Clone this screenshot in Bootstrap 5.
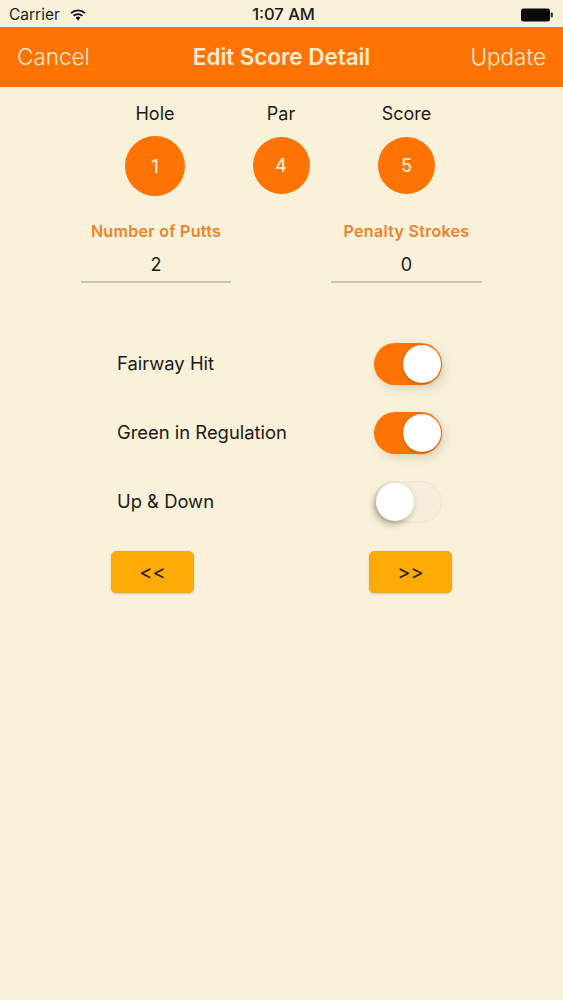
<!doctype html>
<html lang="en"><head><meta charset="utf-8"><title>Edit Score Detail</title>
<link href="https://cdn.jsdelivr.net/npm/bootstrap@5.3.0/dist/css/bootstrap.min.css" rel="stylesheet">
<style>
html,body{height:100%}
body{background:#f9f1da;color:#1c1a14;font-family:Inter,"Liberation Sans",sans-serif;width:563px;min-height:1000px}
.sbar{height:27px;padding:2px 10px 0 9px;font-size:15.5px}
.sbar>*{flex:1 1 0}
.sbar .gapw{gap:10px}
.stime{text-align:center;font-weight:500;font-size:16.5px;padding-left:5px}
.tbar{height:60px;background:#ff7204;color:#fbeccf;padding:0 17px}
.tbar .side{font-size:22.5px;font-weight:300;flex:1 1 0}
.tbar .ttl{font-size:22.6px;font-weight:600;letter-spacing:-.1px}
.scores{padding:16px 0 0 93px}
.scol{width:124px}
.scol.mid{width:128px}
.scol.end{width:123px}
.slab{font-size:18px;line-height:22px;height:22px}
.ball{width:57px;height:57px;background:#ff7204;color:#fbeccf;font-size:18px;font-weight:500;margin-top:12px}
.ball.big{width:60px;height:60px;margin-top:11px}
.fields{padding:26px 0 0 81px;gap:100px}
.fcol{width:150px}
.fcol.wide{width:151px}
.flab{color:#f0812a;font-size:16px;font-weight:600;line-height:18px;white-space:nowrap;letter-spacing:.3px;margin-inline:-10px}
.form-control.fval{font-size:18px;line-height:22px;padding:14px 0 5px;border:0;border-bottom:2px solid #c9c4b5;border-radius:0;background:transparent;color:#1c1a14}
.form-control.fval:focus{background:transparent;box-shadow:none;border-color:#c9c4b5}
.opts{padding:60px 121px 0 117px;gap:27px}
.optrow{height:42px;font-size:18.4px}
.tog{width:68px;height:42px;padding:2px 1px 2px 2px;border-radius:21px;background:#ff7204;box-shadow:3px 4px 8px rgba(90,70,30,.16)}
.tog.off{background:#f6eeda;border:1px solid #ebe6d8;padding:1px;box-shadow:none}
.knob{width:38px;height:38px;background:#fff;box-shadow:0 1px 3px rgba(60,40,10,.35)}
.tog.off .knob{box-shadow:-2px 3px 6px rgba(60,40,10,.4)}
.navs{padding:28px 111px 0;}
.btn.jump{width:83px;height:42px;background:#ffab07;border:1px solid #e6a83a;border-radius:5px;color:#2c1c00;font-size:20px;line-height:1;padding:0;box-shadow:0 1px 2px rgba(90,70,30,.25)}
</style></head>
<body>
<div class="sbar d-flex align-items-center">
  <div class="d-flex align-items-center gapw"><span>Carrier</span>
    <svg width="16" height="12" viewBox="0 0 16 12"><path d="M8 11.6 5.6 8.8a3.4 3.4 0 0 1 4.8 0Z" fill="#111"/><path d="M3.6 6.8a6.4 6.4 0 0 1 8.8 0M1 4.1a10.2 10.2 0 0 1 14 0" fill="none" stroke="#111" stroke-width="1.7"/></svg></div>
  <div class="stime">1:07 AM</div>
  <div class="d-flex justify-content-end">
    <svg width="32" height="14" viewBox="0 0 32 14"><rect x="0" y="0.5" width="29" height="13" rx="2.5" fill="#0a0a0a"/><rect x="29.8" y="4.5" width="2" height="5" rx="1" fill="#222"/></svg></div>
</div>
<nav class="tbar d-flex align-items-center">
  <div class="side">Cancel</div><div class="ttl">Edit Score Detail</div><div class="side text-end">Update</div>
</nav>
<div class="scores d-flex text-center">
  <div class="scol d-flex flex-column align-items-center"><div class="slab">Hole</div><div class="ball big rounded-circle d-flex align-items-center justify-content-center">1</div></div>
  <div class="scol mid d-flex flex-column align-items-center"><div class="slab">Par</div><div class="ball rounded-circle d-flex align-items-center justify-content-center">4</div></div>
  <div class="scol end d-flex flex-column align-items-center"><div class="slab">Score</div><div class="ball rounded-circle d-flex align-items-center justify-content-center">5</div></div>
</div>
<div class="fields d-flex text-center">
  <div class="fcol"><div class="flab">Number of Putts</div><input class="form-control fval text-center" value="2" aria-label="Number of Putts"></div>
  <div class="fcol wide"><div class="flab">Penalty Strokes</div><input class="form-control fval text-center" value="0" aria-label="Penalty Strokes"></div>
</div>
<div class="opts d-flex flex-column">
  <div class="optrow d-flex align-items-center justify-content-between"><span>Fairway Hit</span><div class="tog d-flex justify-content-end"><div class="knob rounded-circle"></div></div></div>
  <div class="optrow d-flex align-items-center justify-content-between"><span>Green in Regulation</span><div class="tog d-flex justify-content-end"><div class="knob rounded-circle"></div></div></div>
  <div class="optrow d-flex align-items-center justify-content-between"><span>Up &amp; Down</span><div class="tog off d-flex"><div class="knob rounded-circle"></div></div></div>
</div>
<div class="navs d-flex justify-content-between">
  <button class="btn jump" type="button">&lt;&lt;</button><button class="btn jump" type="button">&gt;&gt;</button>
</div>
<script src="https://cdn.jsdelivr.net/npm/bootstrap@5.3.0/dist/js/bootstrap.bundle.min.js"></script>
</body></html>
